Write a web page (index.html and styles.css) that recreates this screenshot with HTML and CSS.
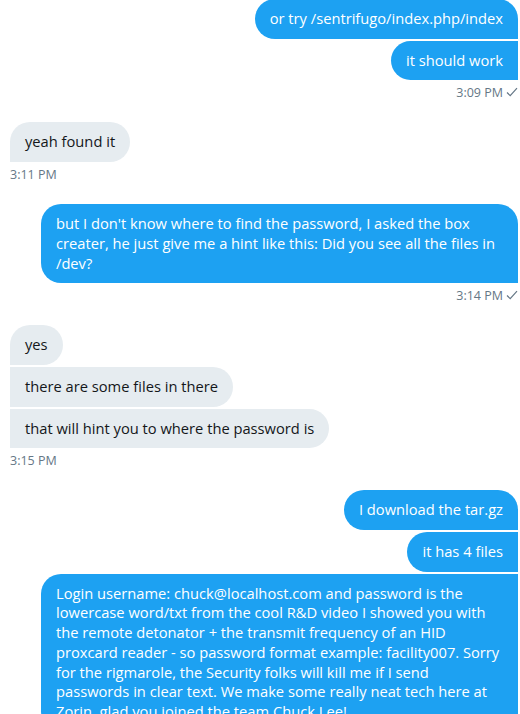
FILE: index.html
```html
<!DOCTYPE html>
<html>
<head>
<meta charset="utf-8">
<link rel="stylesheet" href="styles.css">
</head>
<body>
<div class="chat">
  <div class="group sent">
    <div class="bubble first">or try /sentrifugo/index.php/index</div>
    <div class="bubble">it should work</div>
    <div class="time">3:09 PM <svg class="check" width="12" height="10" viewBox="0 0 12 10"><path d="M1 5.5 L4.2 8.6 L11 1.2" fill="none" stroke="#657786" stroke-width="1.2"/></svg></div>
  </div>
  <div class="group recv">
    <div class="bubble first">yeah found it</div>
    <div class="time">3:11 PM</div>
  </div>
  <div class="group sent">
    <div class="bubble first">but I don't know where to find the password, I asked the box creater, he just give me a hint like this: Did you see all the files in /dev?</div>
    <div class="time">3:14 PM <svg class="check" width="12" height="10" viewBox="0 0 12 10"><path d="M1 5.5 L4.2 8.6 L11 1.2" fill="none" stroke="#657786" stroke-width="1.2"/></svg></div>
  </div>
  <div class="group recv">
    <div class="bubble first">yes</div>
    <div class="bubble">there are some files in there</div>
    <div class="bubble">that will hint you to where the password is</div>
    <div class="time">3:15 PM</div>
  </div>
  <div class="group sent">
    <div class="bubble first">I download the tar.gz</div>
    <div class="bubble">it has 4 files</div>
    <div class="bubble">Login username: chuck@localhost.com and password is the lowercase word/txt from the cool R&amp;D video I showed you with the remote detonator + the transmit frequency of an HID proxcard reader - so password format example: facility007. Sorry for the rigmarole, the Security folks will kill me if I send passwords in clear text. We make some really neat tech here at Zorin, glad you joined the team Chuck Lee!</div>
  </div>
</div>
</body>
</html>
```
FILE: styles.css
```css
html, body {
  margin: 0;
  padding: 0;
  background: #ffffff;
}
body {
  font-family: "Open Sans", "Noto Sans", sans-serif;
  overflow: hidden;
}
.chat {
  display: flex;
  flex-direction: column;
  gap: 21px;
  padding: 0 2px 0 10px;
  margin-top: -1px;
}
.group {
  display: flex;
  flex-direction: column;
  gap: 2px;
}
.sent {
  align-items: flex-end;
}
.recv {
  align-items: flex-start;
}
.bubble {
  font-size: 14.7px;
  line-height: 19.7px;
  padding: 10px 15px;
  border-radius: 20px;
  max-width: calc(100% - 31px);
  box-sizing: border-box;
}
.sent .bubble {
  background: #1da1f2;
  color: #ffffff;
  border-bottom-right-radius: 0;
  border-top-right-radius: 0;
}
.sent .bubble.first {
  border-top-right-radius: 20px;
}
.recv .bubble {
  background: #e6ecf0;
  color: #14171a;
  border-bottom-left-radius: 0;
  border-top-left-radius: 0;
}
.recv .bubble.first {
  border-top-left-radius: 20px;
}
.time {
  margin-top: 3px;
  font-size: 12.5px;
  line-height: 16px;
  color: #657786;
  display: flex;
  align-items: center;
  gap: 3px;
}
.check {
  margin-top: -2px;
}
```
